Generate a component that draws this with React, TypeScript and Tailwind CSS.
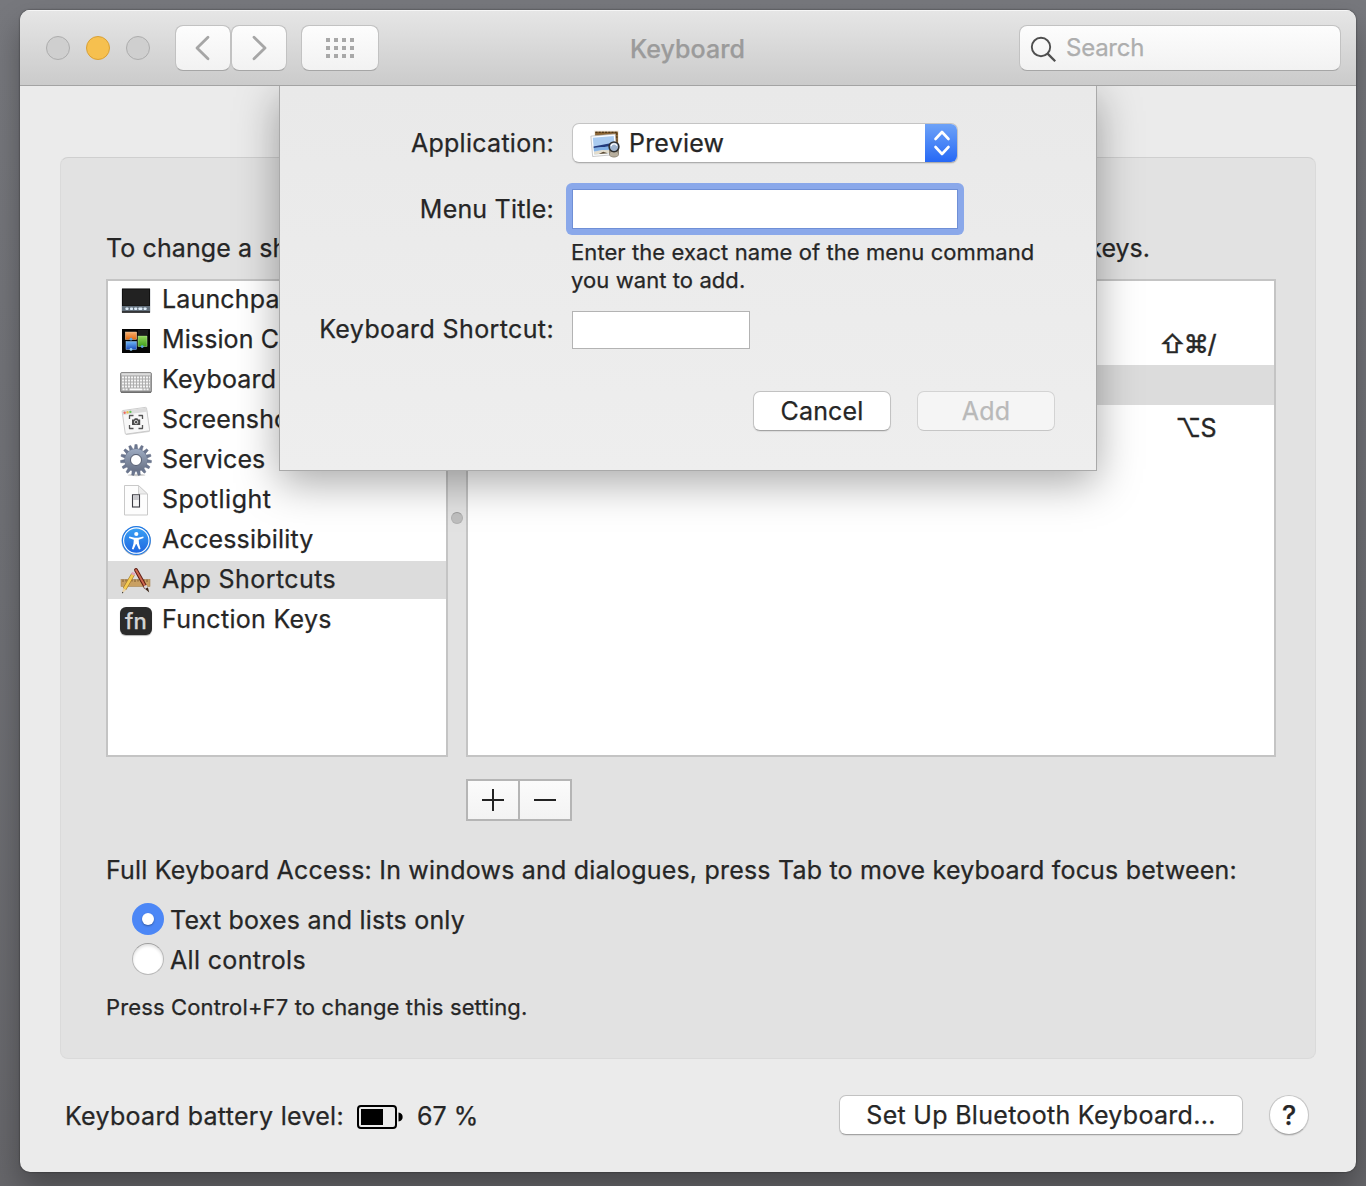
import type { ReactNode } from "react";

function LaunchpadIcon() {
  return (
    <svg width="32" height="32" viewBox="0 0 32 32">
      <rect x="1.5" y="4.5" width="29" height="24.5" rx="1" fill="#c9cdd1" />
      <rect x="2.5" y="5" width="27" height="17" fill="#222" stroke="#111" strokeWidth="1" />
      <rect x="2" y="22" width="28" height="5.6" fill="#63707c" />
      <path d="M2 28h28" stroke="#1d1d1d" strokeWidth="1.6" />
      <g fill="#dfeefb">
        <rect x="5.5" y="23.5" width="3" height="2.6" rx="0.8" />
        <rect x="10" y="23.5" width="3" height="2.6" rx="0.8" />
        <rect x="14.2" y="23.5" width="3" height="2.6" rx="0.8" />
        <rect x="18.4" y="23.5" width="4" height="2.6" rx="0.8" />
        <rect x="23.6" y="23.5" width="3" height="2.6" rx="0.8" />
      </g>
    </svg>
  );
}

function MissionIcon() {
  return (
    <svg width="32" height="32" viewBox="0 0 32 32">
      <defs>
        <linearGradient id="mo" x1="0" y1="0" x2="0" y2="1"><stop stopColor="#f7b070" /><stop offset="1" stopColor="#e26a10" /></linearGradient>
        <linearGradient id="mg" x1="0" y1="0" x2="0" y2="1"><stop stopColor="#93d65c" /><stop offset="1" stopColor="#3f9c1c" /></linearGradient>
        <linearGradient id="mb" x1="0" y1="0" x2="0" y2="1"><stop stopColor="#6db6f5" /><stop offset="1" stopColor="#1d4fc0" /></linearGradient>
      </defs>
      <rect x="2" y="5" width="28" height="24" fill="#050505" />
      <rect x="18" y="6" width="10" height="5" fill="#1c1c1c" />
      <rect x="5.3" y="8" width="11.4" height="7.5" fill="url(#mo)" stroke="#e9c9a8" strokeWidth="0.5" />
      <rect x="6" y="17.5" width="10.5" height="8" fill="url(#mb)" stroke="#9dc8ef" strokeWidth="0.5" />
      <rect x="18" y="12" width="9" height="10.5" fill="url(#mg)" stroke="#b8e39a" strokeWidth="0.5" />
      <circle cx="11" cy="15.2" r="1.4" fill="#5ea8e6" />
      <circle cx="11" cy="25.4" r="1.4" fill="#8ecbf3" />
      <circle cx="22.2" cy="22.6" r="1.4" fill="#5ea8e6" />
    </svg>
  );
}

function KeyboardIcon() {
  return (
    <svg width="32" height="32" viewBox="0 0 32 32">
      <rect x="0.5" y="8.5" width="31" height="20" rx="1.5" fill="#a9a9a9" stroke="#8d8d8d" />
      <path d="M1 28.2h30" stroke="#6f6f6f" strokeWidth="1.6" />
      <path d="M2 13.6h28M2 16.6h28M2 19.6h28M2 22.6h28" stroke="#f4f4f4" strokeWidth="2" strokeDasharray="2.1 0.9" />
      <path d="M2.5 25.4h6M23.5 25.4h6" stroke="#f4f4f4" strokeWidth="1.8" strokeDasharray="2.1 0.9" />
      <path d="M9.5 25.4h13" stroke="#fafafa" strokeWidth="1.8" />
      <path d="M1.5 10.3h29" stroke="#dcdcdc" strokeWidth="2.2" />
    </svg>
  );
}

function ScreenshotIcon() {
  return (
    <svg width="32" height="32" viewBox="0 0 32 32">
      <g transform="rotate(-8 16 17)">
        <rect x="4" y="5.6" width="24.5" height="24" rx="1" fill="#d5d5d5" />
        <rect x="3.6" y="4.8" width="24.6" height="23.8" rx="1" fill="#f8f8f8" stroke="#c4c4c4" strokeWidth="0.8" />
        <rect x="4" y="5.2" width="23.8" height="4" fill="#dcdcdc" />
        <circle cx="5.9" cy="7.2" r="1.2" fill="#ef6a5e" />
        <circle cx="8.8" cy="7.2" r="1.2" fill="#e9c04c" />
        <circle cx="11.7" cy="7.2" r="1.2" fill="#5fc454" />
      </g>
      <path d="M9.500 15v-3.500h4M18.500 11.500h4V15M22.500 21v3.500h-4M13.500 24.500h-4V21" fill="none" stroke="#555" strokeWidth="1.3" strokeLinejoin="round" />
      <path d="M12 15.600h2l.8-1.300h2.600l.8 1.300h2v5.400H12z" fill="#4c4c4c" />
      <circle cx="16.1" cy="18.1" r="1.7" fill="none" stroke="#eee" strokeWidth="0.8" />
    </svg>
  );
}

const GEAR_TEETH = Array.from({ length: 15 }, (_, i) => i * 24);

function GearIcon() {
  return (
    <svg width="32" height="32" viewBox="0 0 32 32" className="overflow-visible">
      <defs>
        <linearGradient id="gear" x1="0" y1="0" x2="0" y2="32" gradientUnits="userSpaceOnUse">
          <stop stopColor="#a9b8cf" />
          <stop offset="1" stopColor="#5c6478" />
        </linearGradient>
      </defs>
      <ellipse cx="16.5" cy="31" rx="9" ry="1.2" fill="#000" opacity="0.2" />
      <g fill="#6c7790" stroke="#5a647b" strokeWidth="0.4">
        {GEAR_TEETH.map((a) => (
          <path key={a} d="M14.200 6 14.900 .500h2.200L17.800 6z" transform={`rotate(${a} 16 16)`} />
        ))}
      </g>
      <circle cx="16" cy="16" r="11.5" fill="#6c7790" />
      <circle cx="16" cy="16" r="8.5" fill="none" stroke="url(#gear)" strokeWidth="5.2" />
      <circle cx="16" cy="16" r="5.5" fill="#fff" stroke="#4d5568" strokeWidth="0.9" />
    </svg>
  );
}

function SpotlightIcon() {
  return (
    <svg width="32" height="32" viewBox="0 0 32 32">
      <path d="M4.500 1.500h14l9 8.500v21h-23z" fill="#fdfdfd" stroke="#c9c9c9" strokeLinejoin="round" />
      <path d="M18.500 1.500V10h9z" fill="#ececec" stroke="#c9c9c9" strokeWidth="0.8" strokeLinejoin="round" />
      <rect x="12.5" y="10.8" width="7" height="12.2" fill="#f6f6f6" stroke="#3b3b42" strokeWidth="1.1" />
      <rect x="13.2" y="11.5" width="5.6" height="4.5" fill="#c9c9cd" />
    </svg>
  );
}

function AccessibilityIcon() {
  return (
    <svg width="32" height="32" viewBox="0 0 32 32">
      <defs>
        <linearGradient id="acc" x1="0" y1="0" x2="0" y2="1"><stop stopColor="#3aa0f4" /><stop offset="1" stopColor="#1f66e0" /></linearGradient>
      </defs>
      <circle cx="16.3" cy="17" r="14.7" fill="#b9bcc2" />
      <circle cx="16.3" cy="16.6" r="14.5" fill="#1f7ae6" />
      <circle cx="16.3" cy="16.6" r="12.7" fill="url(#acc)" stroke="#fff" strokeWidth="1.1" />
      <circle cx="16.3" cy="10" r="2.1" fill="#fff" />
      <path d="M9.400 12.600l5.200 1.200h3.500l5.200-1.200.3 1.500-4.900 1.700.3 3.700 1.600 5.400-1.600.5-2.500-5.300h-.5l-2.500 5.300-1.600-.5 1.600-5.400.3-3.700-4.900-1.700z" fill="#fff" />
    </svg>
  );
}

function AppShortcutsIcon() {
  return (
    <svg width="32" height="32" viewBox="0 0 32 32" className="overflow-visible">
      <rect x="1" y="15.5" width="29" height="7" fill="#c9a062" stroke="#a07a45" strokeWidth="0.5" />
      <path d="M3 15.500v2.500M6 15.500v2M9 15.500v2.500M12 15.500v2M15 15.500v2.500M18 15.500v2M21 15.500v2.500M24 15.500v2M27 15.500v2.500" stroke="#6b4a24" strokeWidth="0.8" />
      <path d="M16 6 25.500 23" stroke="#5e1c14" strokeWidth="3.8" strokeLinecap="round" />
      <path d="M16 6 25 22" stroke="#cf6a50" strokeWidth="1.8" strokeLinecap="round" />
      <path d="M23.600 22.500l3-1.700 1.300 2.700-2.700 1.600z" fill="#d6d6d6" />
      <path d="M25.200 25l2.700-1.600 1.300 5.200z" fill="#3a2417" />
      <path d="M13.200 10 4.500 25" stroke="#9b7220" strokeWidth="3.8" />
      <path d="M13.200 10 4.500 25" stroke="#f5cb52" strokeWidth="2.700" />
      <path d="M13.900 8.600l-1.200 2.200" stroke="#e2a3ba" strokeWidth="3.8" />
      <path d="M3 24.200l3.100 1.800L2 29.600z" fill="#ead2a6" />
      <path d="M2.300 27.800l1.200.7L2 29.600z" fill="#222" />
    </svg>
  );
}

function FnIcon() {
  return (
    <span className="mt-[2px] flex h-[28px] w-[32px] items-center justify-center rounded-[6px] bg-[#2b2b2b] pb-px text-[22px] font-medium leading-none tracking-[0.3px] text-[#d4d4d4] shadow-[0_1px_1px_rgba(0,0,0,0.3)]">
      fn
    </span>
  );
}

function PreviewIcon() {
  return (
    <svg width="32" height="30" viewBox="0 0 32 30" className="overflow-visible">
      <rect x="4.5" y="3" width="24" height="19" fill="#8a6432" stroke="#f3efe8" strokeWidth="1.2" />
      <path d="M5.500 4.300h22M26.800 5v13" stroke="#4f3718" strokeWidth="1.2" strokeDasharray="2 1.2" />
      <g transform="rotate(-5 14 16)">
        <rect x="1.6" y="7" width="24.5" height="20.5" fill="#fdfdfd" stroke="#a9a9a9" strokeWidth="0.6" />
        <rect x="3.4" y="8.8" width="21" height="16.8" fill="#a9cbf0" />
        <path d="M3.400 17.500 24.400 15.500v3.500H3.400z" fill="#223a7c" />
        <rect x="3.4" y="19" width="21" height="3" fill="#7fb0e6" />
        <path d="M3.400 25.600V22.800l8-1 8 1 5-.5v3.300z" fill="#e4ddcc" />
        <path d="M8 25.600l4.500-2 4.500 2z" fill="#5a4b36" />
      </g>
      <path d="M19 20v6a5 3.600 0 0 0 10 0v-6z" fill="#8f8677" />
      <ellipse cx="24" cy="26" rx="4.2" ry="2.6" fill="#b7ae9d" />
      <circle cx="24" cy="18.8" r="4.9" fill="#9fb3cc" stroke="#2f2f2f" strokeWidth="1.5" />
      <path d="M20.900 18.200a3.300 3.300 0 0 1 6-.600" fill="none" stroke="#fff" strokeWidth="1.3" />
    </svg>
  );
}

function ToolButton({ w, children }: { w: string; children: ReactNode }) {
  return (
    <button
      className={`${w} flex h-[46px] items-center justify-center rounded-[8px] border border-[#c2c2c2] border-b-[#a6a6a6] bg-linear-to-b from-[#fdfdfd] to-[#f2f2f2] bg-clip-padding`}
    >
      {children}
    </button>
  );
}

const items: { label: string; icon: ReactNode; track: string }[] = [
  { label: "Launchpad", icon: <LaunchpadIcon />, track: "tracking-[0.15px]" },
  { label: "Mission Control", icon: <MissionIcon />, track: "tracking-[0.1px]" },
  { label: "Keyboard", icon: <KeyboardIcon />, track: "tracking-[0.15px]" },
  { label: "Screenshots", icon: <ScreenshotIcon />, track: "tracking-[0.1px]" },
  { label: "Services", icon: <GearIcon />, track: "tracking-[0.1px]" },
  { label: "Spotlight", icon: <SpotlightIcon />, track: "tracking-[0.5px]" },
  { label: "Accessibility", icon: <AccessibilityIcon />, track: "tracking-[0.2px]" },
  { label: "App Shortcuts", icon: <AppShortcutsIcon />, track: "tracking-[0.43px]" },
  { label: "Function Keys", icon: <FnIcon />, track: "tracking-[0.3px]" },
];

function Sheet() {
  return (
    <div className="absolute left-[259px] top-[-1px] flex h-[386px] w-[818px] flex-col border border-[#a9a9a9] bg-linear-to-b from-[#e9e9e9] to-[#eeeeee] pt-[37px] shadow-[0_12px_40px_rgba(0,0,0,0.34)]">
      <div className="flex h-[40px] items-center">
        <label className="w-[274px] pb-px text-right tracking-[0.28px]">Application:</label>
        <div className="ml-[18px] flex h-[40px] w-[386px] items-center overflow-hidden rounded-[7px] border border-[#c4c4c4] border-b-[#adadad] bg-white pl-[17px] shadow-[0_1px_1px_rgba(0,0,0,0.08)]">
          <PreviewIcon />
          <span className="ml-[7px] flex-1 pb-px tracking-[0.2px]">Preview</span>
          <span className="-my-px -mr-px flex h-[40px] w-[33px] items-center justify-center bg-linear-to-b from-[#6fa3f7] to-[#2466f5]">
            <svg width="18" height="26" viewBox="0 0 18 26" fill="none" stroke="#fff" strokeWidth="2.6" strokeLinecap="round" strokeLinejoin="round">
              <path d="M2.500 9 9 2 15.500 9M2.500 17l6.500 7 6.500-7" />
            </svg>
          </span>
        </div>
      </div>
      <div className="mt-[20px] flex h-[52px] items-center">
        <label className="w-[274px] text-right tracking-[0.2px]">Menu Title:</label>
        <div className="ml-[12px] flex h-[52px] w-[398px] rounded-[6px] bg-[#8aa8ea] p-[6px]">
          <div className="flex-1 border border-[#6f8fd6] bg-white" />
        </div>
      </div>
      <p className="ml-[291px] mt-[3px] text-[22px] leading-[28px] tracking-[0.08px]">
        Enter the exact name of the menu command
        <br />
        you want to add.
      </p>
      <div className="mt-[17px] flex h-[38px] items-center">
        <label className="w-[274px] pb-[3px] text-right tracking-[0.38px]">Keyboard Shortcut:</label>
        <div className="ml-[18px] h-[38px] w-[178px] border border-[#b3b3b3] bg-white" />
      </div>
      <div className="mt-[42px] flex h-[40px] justify-end gap-[26px] pr-[41px]">
        <button className="w-[138px] rounded-[7px] border border-[#c2c2c2] border-b-[#a3a3a3] bg-white tracking-[0.15px] shadow-[0_1px_1px_rgba(0,0,0,0.08)]">
          Cancel
        </button>
        <button className="w-[138px] rounded-[7px] border border-[#d3d3d3] border-b-[#c6c6c6] bg-[#f5f5f5] tracking-[0.15px] text-[#b9b9b9]">
          Add
        </button>
      </div>
    </div>
  );
}

export default function App() {
  return (
    <main className="h-[1186px] w-[1366px] overflow-hidden bg-linear-to-b from-[#77787d] via-[#6f7075] to-[#66666a] pl-[20px] pr-[10px] pt-[10px] font-['Inter',sans-serif] text-[25px] leading-[30px] text-[#262626] [-webkit-text-stroke:0.25px]">
      <div className="flex h-[1162px] w-[1336px] flex-col overflow-hidden rounded-[10px] bg-[#ebebeb] shadow-[0_0_2px_rgba(0,0,0,0.6),0_16px_30px_rgba(0,0,0,0.3)]">
        <header className="flex h-[76px] shrink-0 items-center border-b border-[#a3a3a3] bg-linear-to-b from-[#e6e6e6] to-[#cbcbcb] pl-[26px] pr-[15px] shadow-[inset_0_1px_0_#f6f6f6]">
          <div className="flex gap-[16px]">
            <span className="size-[24px] rounded-full border border-[#adadad] bg-[#cfcfcf]" />
            <span className="size-[24px] rounded-full border border-[#d9a035] bg-[#f6c04f]" />
            <span className="size-[24px] rounded-full border border-[#adadad] bg-[#cfcfcf]" />
          </div>
          <div className="ml-[25px] flex">
            <ToolButton w="w-[56px]">
              <svg width="16" height="26" viewBox="0 0 16 26" fill="none" stroke="#a6a6a6" strokeWidth="2.8" strokeLinecap="round" strokeLinejoin="round">
                <path d="M13 2.200 2 13l11 10.800" />
              </svg>
            </ToolButton>
            <ToolButton w="w-[56px]">
              <svg width="16" height="26" viewBox="0 0 16 26" fill="none" stroke="#a6a6a6" strokeWidth="2.8" strokeLinecap="round" strokeLinejoin="round">
                <path d="M3 2.200 14 13 3 23.800" />
              </svg>
            </ToolButton>
          </div>
          <div className="ml-[14px]">
            <ToolButton w="w-[78px]">
              <span className="grid grid-cols-4 gap-[4px]">
                {Array.from({ length: 12 }, (_, i) => (
                  <span key={i} className="size-[4px] bg-[#a8a8a8]" />
                ))}
              </span>
            </ToolButton>
          </div>
          <h1 className="ml-[251px] pt-[2px] font-medium tracking-[0.05px] text-[#9b9b9b]">Keyboard</h1>
          <div className="ml-auto flex h-[46px] w-[322px] items-center rounded-[8px] border border-[#c2c2c2] border-b-[#a6a6a6] bg-linear-to-b from-[#fdfdfd] to-[#f2f2f2] pl-[10px]">
            <svg width="27" height="27" viewBox="0 0 27 27" fill="none" stroke="#4f4f4f" strokeWidth="1.9" className="mt-[3px]">
              <circle cx="11" cy="11" r="9.2" />
              <path d="M17.600 17.600 25.200 25.200" strokeWidth="2.3" />
            </svg>
            <span className="ml-[9px] pt-px text-[24px] tracking-[-0.25px] text-[#aeaeae]">Search</span>
          </div>
        </header>

        <div className="relative flex flex-1 flex-col overflow-hidden px-[40px] pt-[71px]">
          <section className="flex h-[902px] flex-col rounded-[8px] border border-[#dadada] border-t-[#cfcfcf] bg-[#e2e2e2] pl-[45px] pr-[39px] pt-[70px]">
            <div className="flex h-[40px] items-center justify-between whitespace-nowrap pr-[126px]">
              <p className="tracking-[0.1px]">To change a shortcut,</p>
              <p>keys.</p>
            </div>
            <div className="mt-[11px] flex h-[478px]">
              <ul className="flex w-[342px] shrink-0 flex-col border-2 border-[#c4c4c4] bg-white">
                {items.map((it) => (
                  <li
                    key={it.label}
                    className={`${it.label === "App Shortcuts" ? "bg-[#dcdcdc]" : ""} mb-[2px] flex h-[38px] items-center pl-[12px]`}
                  >
                    <span className="flex w-[32px] justify-center">{it.icon}</span>
                    <span className={`${it.track} ml-[10px] whitespace-nowrap pb-[3px]`}>{it.label}</span>
                  </li>
                ))}
              </ul>
              <div className="flex w-[18px] shrink-0 justify-center pt-[233px]">
                <span className="size-[12px] rounded-full border border-[#b3b3b3] border-t-[#9a9a9a] bg-[#bfbfbf]" />
              </div>
              <ul className="flex w-[810px] shrink-0 flex-col gap-[2px] border-2 border-[#c4c4c4] bg-white text-right">
                <li className="h-[40px]" />
                <li className="h-[40px] pr-[59px] leading-[43px] tracking-[-1.4px] [-webkit-text-stroke:0.5px]">⇧⌘/</li>
                <li className="h-[40px] bg-[#dcdcdc]" />
                <li className="h-[40px] pr-[58px] leading-[43px] tracking-[-0.6px] [-webkit-text-stroke:0.4px]">⌥S</li>
              </ul>
            </div>
            <div className="ml-[360px] mt-[22px] flex h-[42px] w-[106px] divide-x-2 divide-[#b5b5b5] border-2 border-[#b5b5b5] bg-linear-to-b from-[#fbfbfb] to-[#f3f3f3]">
              <button className="flex w-[52px] items-center justify-center">
                <svg width="22" height="22" viewBox="0 0 22 22" stroke="#222" strokeWidth="2">
                  <path d="M11 0v22M0 11h22" />
                </svg>
              </button>
              <button className="flex w-[50px] items-center justify-center">
                <svg width="22" height="22" viewBox="0 0 22 22" stroke="#222" strokeWidth="2">
                  <path d="M0 11h22" />
                </svg>
              </button>
            </div>
            <p className="mt-[29px] h-[40px] whitespace-nowrap leading-[40px] tracking-[0.2px]">
              Full Keyboard Access: In windows and dialogues, press Tab to move keyboard focus between:
            </p>
            <div className="mt-[9px] flex h-[40px] items-center pl-[26px]">
              <span className="flex size-[32px] items-center justify-center rounded-full bg-[#4c87f6]">
                <span className="size-[12px] rounded-full bg-white shadow-[0_1px_2px_rgba(0,0,0,0.35)]" />
              </span>
              <span className="ml-[6px] pt-[2px] tracking-[0.21px]">Text boxes and lists only</span>
            </div>
            <div className="flex h-[40px] items-center pl-[26px]">
              <span className="size-[32px] rounded-full border border-[#b9b9b9] border-t-[#9e9e9e] bg-white shadow-[inset_0_2px_3px_rgba(0,0,0,0.12)]" />
              <span className="ml-[6px] pt-[2px] tracking-[0.34px]">All controls</span>
            </div>
            <p className="mt-[13px] text-[22px] tracking-[0.14px]">Press Control+F7 to change this setting.</p>
          </section>

          <footer className="mt-[36px] flex h-[40px] items-center pl-[5px] pr-[7px]">
            <span className="pt-px tracking-[0.3px]">Keyboard battery level:</span>
            <svg className="ml-auto mr-[14px] mt-[4px]" width="46" height="24" viewBox="0 0 46 24">
              <rect x="1" y="1" width="38" height="22" rx="3" fill="none" stroke="#000" strokeWidth="2" />
              <rect x="4" y="4" width="22" height="16" fill="#000" />
              <path d="M41.500 7.500c5.500 0 5.500 9 0 9z" fill="#000" />
            </svg>
            <span className="w-[422px] pt-px tracking-[0px]">67 %</span>
            <button className="h-[40px] w-[404px] rounded-[7px] border border-[#c2c2c2] border-b-[#a3a3a3] bg-white tracking-[0.3px] shadow-[0_1px_1px_rgba(0,0,0,0.08)]">
              Set Up Bluetooth Keyboard...
            </button>
            <button className="ml-[26px] flex size-[40px] items-center justify-center rounded-full border border-[#c6c6c6] border-b-[#a8a8a8] bg-white pt-px text-[27px] font-medium shadow-[0_1px_1px_rgba(0,0,0,0.1)]">
              ?
            </button>
          </footer>
          <Sheet />
        </div>
      </div>
    </main>
  );
}
